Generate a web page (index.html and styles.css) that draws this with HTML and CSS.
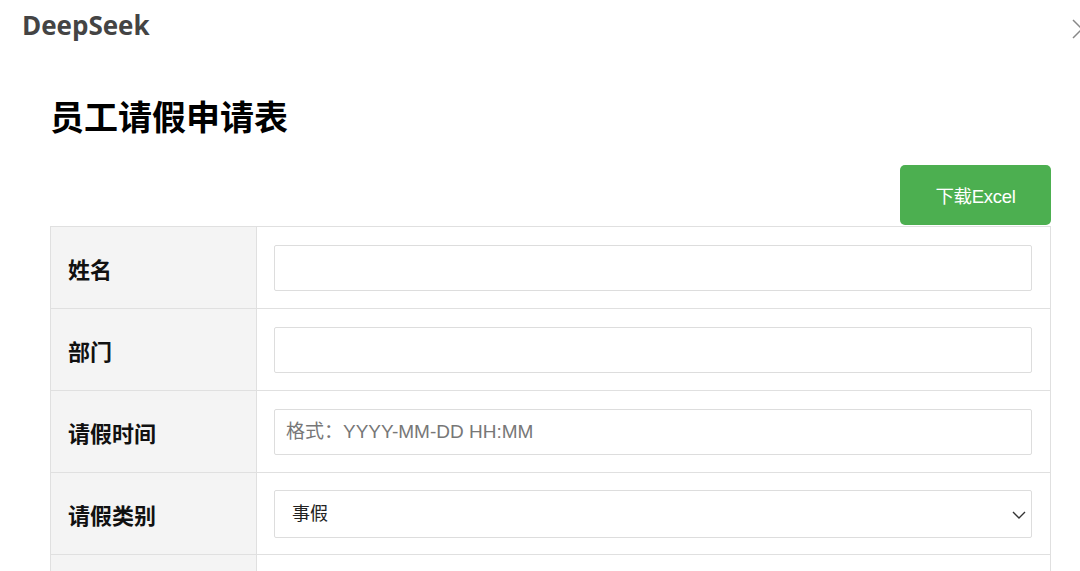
FILE: index.html
```html
<!DOCTYPE html>
<html lang="zh">
<head>
<meta charset="utf-8">
<link rel="stylesheet" href="styles.css">
</head>
<body>
<header class="topbar">
  <div class="logo">DeepSeek</div>
  <svg class="close" width="14" height="20" viewBox="0 0 14 20"><path d="M1 1 L10 10 L1 19" fill="none" stroke="#888" stroke-width="1.5"/></svg>
</header>
<main class="page">
  <h1 class="title">员工请假申请表</h1>
  <div class="actions"><button class="btn">下载Excel</button></div>
  <table class="form">
    <tr><th>姓名</th><td><input class="field" type="text"></td></tr>
    <tr><th>部门</th><td><input class="field" type="text"></td></tr>
    <tr><th>请假时间</th><td><input class="field" type="text" placeholder="格式：YYYY-MM-DD HH:MM"></td></tr>
    <tr><th>请假类别</th><td><div class="selwrap"><select class="field sel"><option>事假</option></select><svg class="chev" width="14" height="8" viewBox="0 0 14 8"><path d="M1 1 L7 7 L13 1" fill="none" stroke="#333" stroke-width="1.4"/></svg></div></td></tr>
    <tr><th>&nbsp;</th><td>&nbsp;</td></tr>
  </table>
</main>
</body>
</html>
```
FILE: styles.css
```css
html, body { margin: 0; padding: 0; background: #fff; }
body { font-family: "Liberation Sans", "Noto Sans CJK SC", sans-serif; color: #111; overflow: hidden; height: 571px; }
.topbar { height: 56px; display: flex; align-items: flex-start; justify-content: space-between; padding-left: 22px; }
.logo { font-family: "Open Sans", sans-serif; font-weight: 700; font-size: 26px; color: #444; line-height: 28px; margin-top: 11px; letter-spacing: 0; }
.close { margin-top: 19px; margin-right: -6px; }
.page { padding-left: 50px; width: 1001px; }
.title { margin: 36px 0 0; font-size: 34px; font-weight: 700; line-height: 48px; color: #000; font-family: "Noto Sans CJK SC", sans-serif; }
.actions { display: flex; justify-content: flex-end; margin-top: 25px; }
.btn { width: 151px; height: 60px; border: 0; border-radius: 5px; background: #4caf50; color: #fff; font-size: 18.5px; font-family: "Liberation Sans", "Noto Sans CJK SC", sans-serif; padding: 0; margin-bottom: 1px; letter-spacing: -0.3px; }
.form { width: 1001px; border-collapse: collapse; table-layout: fixed; }
.form th, .form td { border: 1px solid #e0e0e0; height: 82px; padding: 0 18px 0 17px; box-sizing: border-box; vertical-align: middle; }
.form th { width: 206px; background: #f4f4f4; text-align: left; font-size: 22px; font-weight: 700; color: #111; font-family: "Noto Sans CJK SC", sans-serif; }
.field { display: block; width: 100%; box-sizing: border-box; height: 46px; border: 1px solid #ddd; border-radius: 2px; padding: 0 11px; font-size: 19px; font-family: "Liberation Sans", "Noto Sans CJK SC", sans-serif; color: #222; background: #fff; outline: none; }
.field::placeholder { color: #777; }
.selwrap { position: relative; }
.sel { appearance: none; -webkit-appearance: none; height: 48px; padding-left: 17px; font-size: 18px; }
.chev { position: absolute; right: 6px; top: 21px; pointer-events: none; }
```
